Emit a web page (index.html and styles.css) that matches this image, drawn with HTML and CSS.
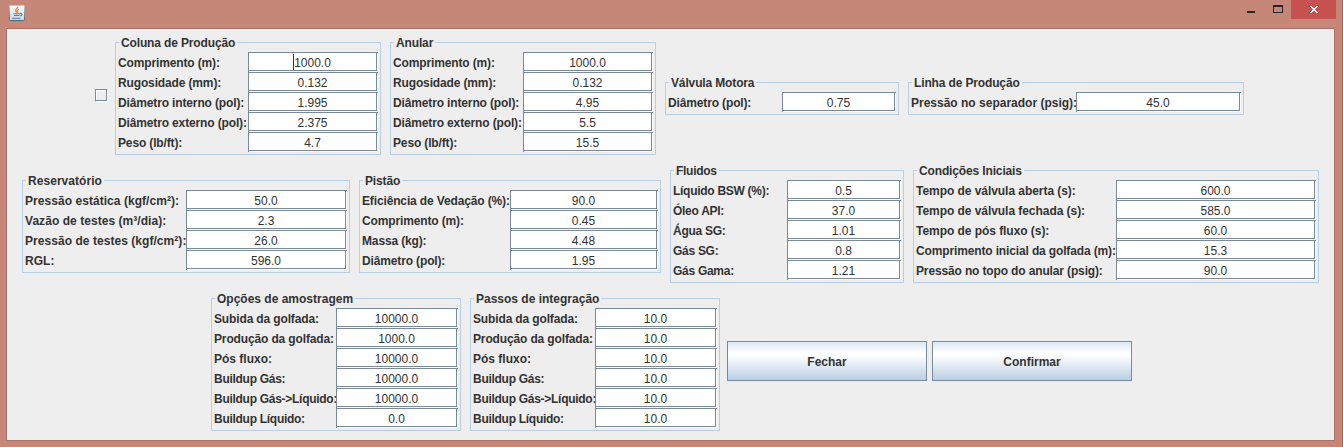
FILE: index.html
```html
<!DOCTYPE html>
<html lang="pt-BR">
<head>
<meta charset="utf-8">
<title>Simulador</title>
<link rel="stylesheet" href="styles.css">
</head>
<body>
<div class="window">
  <header class="titlebar">
    <svg class="app-icon" width="16" height="16" viewBox="0 0 16 16">
      <defs><linearGradient id="tile" x1="0" y1="0" x2="0" y2="1"><stop offset="0" stop-color="#fafbfc"/><stop offset="1" stop-color="#ccd8df"/></linearGradient>
      <linearGradient id="rim" x1="0" y1="0" x2="0" y2="1"><stop offset="0" stop-color="#c3cbcf"/><stop offset="1" stop-color="#47687b"/></linearGradient></defs>
      <rect x=".5" y=".5" width="15" height="15" rx="1" fill="url(#tile)" stroke="url(#rim)"/>
      <path d="M8.600 1.800c.8 1.600-2.600 2.300-1.900 4 .2.600.9 1 1 1.800M9.900 4.200c-1.500.8-1.900 1.300-1.200 2.200.4.500.1 1-.3 1.400" fill="none" stroke="#e58a3e" stroke-width="1.300"/>
      <path d="M4.300 8.700h6.500M5 10.500h5.400M3 13.300h8.500M11 8.500c2.600-.7 2.600 1.800.2 2.600" fill="none" stroke="#5382a1" stroke-width="1.100"/>
    </svg>
    <div class="controls">
      <svg class="control" width="8" height="2"><rect width="8" height="2" fill="#262626"/></svg>
      <svg class="control max" width="10" height="8"><path d="M0 0h10v8H0zM1 2v5h8V2z" fill="#262626" fill-rule="evenodd"/></svg>
      <span class="close"><svg width="8" height="7" viewBox="0 0 8 7"><path d="M0 0h2v1h1v1h2V1h1V0h2v1H7v1H6v1H5v1h1v1h1v1h1v1H6V6H5V5H3v1H2v1H0V6h1V5h1V4h1V3H2V2H1V1H0z" fill="#fff"/></svg></span>
    </div>
  </header>
  <main class="content">
    <section class="row first">
      <input class="check" type="checkbox">
      <fieldset class="panel column tight">
        <legend>Coluna de Produção</legend>
        <label>Comprimento (m):</label><span class="focused"><input value="1000.0"></span>
        <label>Rugosidade (mm):</label><input value="0.132">
        <label>Diâmetro interno (pol):</label><input value="1.995">
        <label>Diâmetro externo (pol):</label><input value="2.375">
        <label>Peso (lb/ft):</label><input value="4.7">
      </fieldset>
      <fieldset class="panel column tight">
        <legend>Anular</legend>
        <label>Comprimento (m):</label><input value="1000.0">
        <label>Rugosidade (mm):</label><input value="0.132">
        <label>Diâmetro interno (pol):</label><input value="4.95">
        <label>Diâmetro externo (pol):</label><input value="5.5">
        <label>Peso (lb/ft):</label><input value="15.5">
      </fieldset>
      <fieldset class="panel valve tight">
        <legend>Válvula Motora</legend>
        <label>Diâmetro (pol):</label><input value="0.75">
      </fieldset>
      <fieldset class="panel line">
        <legend class="tight">Linha de Produção</legend>
        <label>Pressão no separador (psig):</label><input value="45.0">
      </fieldset>
    </section>
    <section class="row">
      <fieldset class="panel reservoir">
        <legend>Reservatório</legend>
        <label>Pressão estática (kgf/cm²):</label><input value="50.0">
        <label>Vazão de testes (m³/dia):</label><input value="2.3">
        <label>Pressão de testes (kgf/cm²):</label><input value="26.0">
        <label>RGL:</label><input value="596.0">
      </fieldset>
      <fieldset class="panel piston tight">
        <legend>Pistão</legend>
        <label>Eficiência de Vedação (%):</label><input value="90.0">
        <label>Comprimento (m):</label><input value="0.45">
        <label>Massa (kg):</label><input value="4.48">
        <label>Diâmetro (pol):</label><input value="1.95">
      </fieldset>
      <fieldset class="panel valve tighter">
        <legend>Fluidos</legend>
        <label>Líquido BSW (%):</label><input value="0.5">
        <label>Óleo API:</label><input value="37.0">
        <label>Água SG:</label><input value="1.01">
        <label>Gás SG:</label><input value="0.8">
        <label>Gás Gama:</label><input value="1.21">
      </fieldset>
      <fieldset class="panel initial">
        <legend class="tight">Condições Iniciais</legend>
        <label>Tempo de válvula aberta (s):</label><input value="600.0">
        <label>Tempo de válvula fechada (s):</label><input value="585.0">
        <label>Tempo de pós fluxo (s):</label><input value="60.0">
        <label class="tight">Comprimento inicial da golfada (m):</label><input value="15.3">
        <label class="tight">Pressão no topo do anular (psig):</label><input value="90.0">
      </fieldset>
    </section>
    <section class="row last">
      <fieldset class="panel steps">
        <legend>Opções de amostragem</legend>
        <label class="tight">Subida da golfada:</label><input value="10000.0">
        <label class="tight">Produção da golfada:</label><input value="1000.0">
        <label>Pós fluxo:</label><input value="10000.0">
        <label class="tighter">Buildup Gás:</label><input value="10000.0">
        <label class="tighter">Buildup Gás-&gt;Líquido:</label><input value="10000.0">
        <label class="tighter">Buildup Líquido:</label><input value="0.0">
      </fieldset>
      <fieldset class="panel steps">
        <legend>Passos de integração</legend>
        <label class="tight">Subida da golfada:</label><input value="10.0">
        <label class="tight">Produção da golfada:</label><input value="10.0">
        <label>Pós fluxo:</label><input value="10.0">
        <label class="tighter">Buildup Gás:</label><input value="10.0">
        <label class="tighter">Buildup Gás-&gt;Líquido:</label><input value="10.0">
        <label class="tighter">Buildup Líquido:</label><input value="10.0">
      </fieldset>
      <div class="actions">
        <button>Fechar</button>
        <button>Confirmar</button>
      </div>
    </section>
  </main>
</div>
</body>
</html>
```
FILE: styles.css
```css
* { box-sizing: border-box; }
body {
  margin: 0;
  font: 12px "Liberation Sans", Arial, sans-serif;
  color: #333;
}
.window {
  width: 1343px;
  height: 447px;
  padding: 0 7px 6px 6px;
  display: flex;
  flex-direction: column;
  background: #c68778;
  border-right: 1px solid #9f6c60;
  overflow: hidden;
}
.titlebar {
  height: 28px;
  flex: none;
  display: flex;
  justify-content: space-between;
  align-items: flex-start;
}
.app-icon { margin: 5px 0 0 3px; }
.controls { display: flex; align-items: flex-start; margin-right: -1px; }
.control { margin-top: 11px; }
.control.max { margin: 5px 8px 0 18px; }
.close {
  width: 45px;
  height: 19px;
  display: flex;
  align-items: center;
  justify-content: center;
  background: #c75050;
}
.content {
  flex: 1;
  display: flex;
  flex-direction: column;
  gap: 6px;
  padding-top: 4px;
  background: #eee;
  border: 1px solid #a87366;
}
.row { display: flex; justify-content: center; align-items: center; gap: 9px; }
.row.first { padding-right: 2px; }
.row.last { padding-left: 2px; }
.panel {
  display: grid;
  grid-auto-rows: 20px;
  margin: 0;
  padding: 0 2px 2px;
  border: 1px solid #b8cfe5;
  min-width: 0;
}
.column { grid-template-columns: 130px 130px; }
.valve { grid-template-columns: 114px 114px; }
.line { grid-template-columns: 165px 165px; }
.reservoir { grid-template-columns: 161px 161px; letter-spacing: 0.05px; }
.piston { grid-template-columns: 148px 148px; }
.initial { grid-template-columns: 200px 200px; letter-spacing: -0.05px; }
.steps { grid-template-columns: 122px 122px; }
.tight { letter-spacing: -0.14px; }
.tighter { letter-spacing: -0.28px; }
legend {
  height: 19px;
  line-height: 20px;
  margin-left: 1px;
  padding: 0 2px;
  font-weight: bold;
}
label {
  height: 20px;
  font-weight: bold;
  line-height: 22px;
  white-space: nowrap;
}
.panel input {
  display: block;
  width: 100%;
  height: 20px;
  margin: 0;
  padding: 0 2px 0 0;
  font: inherit;
  letter-spacing: 0;
  color: #333;
  text-align: center;
  background: #fff;
  border: 1px solid #7a8a99;
  border-right: 0;
  border-bottom: 0;
  box-shadow: inset -1px -1px #f9f9f9, inset -2px -2px #7a8a99;
  outline: 0;
}
.focused { position: relative; }
.focused::after {
  content: "";
  position: absolute;
  left: 45px;
  top: 2px;
  width: 1px;
  height: 16px;
  background: #333;
}
.check {
  appearance: none;
  width: 13px;
  height: 13px;
  margin: 2px -2px 0 0;
  border: 1px solid #7a8a99;
  border-right-color: #fff;
  border-bottom-color: #fff;
  box-shadow: inset -1px -1px #7a8a99, inset 1px 1px #fff;
}
.actions { display: flex; gap: 5px; margin: 2px 0 0 -2px; }
button {
  width: 200px;
  height: 40px;
  padding: 1px 0 0;
  font: bold 12px "Liberation Sans", Arial, sans-serif;
  color: #333;
  border: 1px solid #7a8a99;
  border-radius: 0;
  background: linear-gradient(#dde8f3, #fff 30%, #fff 35%, #b8cfe5);
}
```
